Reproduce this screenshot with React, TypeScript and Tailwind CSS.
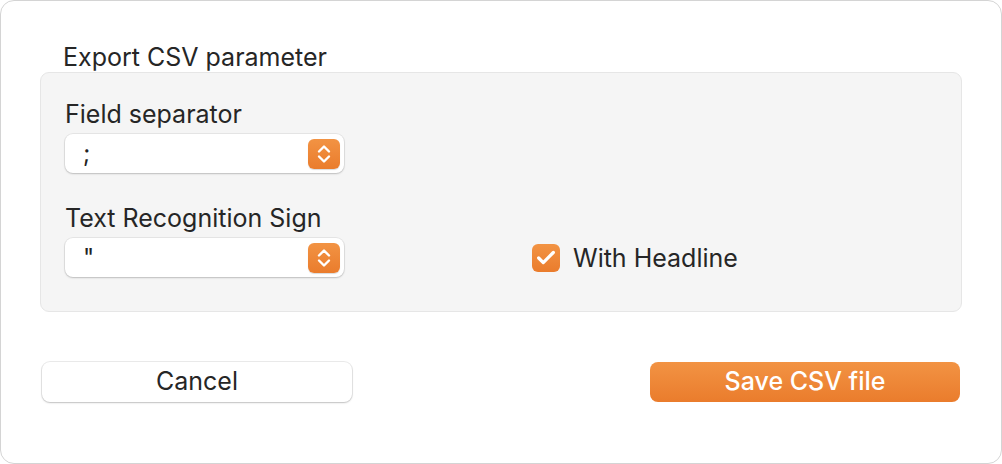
import { Check } from 'lucide-react'

function Stepper() {
  return (
    <div className="w-[32px] h-[30px] rounded-[6px] bg-gradient-to-b from-[#f29343] to-[#ea7c2c] flex items-center justify-center shadow-[0_1px_1px_rgba(0,0,0,0.15)]">
      <svg width="16" height="22" viewBox="0 0 16 22" fill="none" stroke="white" strokeWidth="2.4" strokeLinecap="round" strokeLinejoin="round">
        <path d="M3 8.5 L8 3.5 L13 8.5" />
        <path d="M3 13.5 L8 18.5 L13 13.5" />
      </svg>
    </div>
  )
}

function Select({ value }: { value: string }) {
  return (
    <div className="w-[279px] h-[39px] bg-white rounded-[8px] shadow-[0_0_0_1px_rgba(0,0,0,0.06),0_1px_2px_rgba(0,0,0,0.18)] flex items-center justify-between pl-[18px] pr-[4px]">
      <span className="text-[24px] text-[#222]">{value}</span>
      <Stepper />
    </div>
  )
}

export default function App() {
  return (
    <div className="w-[1002px] h-[464px] bg-white">
      <div
        className="h-full bg-white rounded-[14px] border border-[#d4d4d4] text-[#262626] flex flex-col"
        style={{ fontFamily: 'Inter, "Noto Sans", sans-serif' }}
      >
        {/* Title */}
        <div className="pl-[62px] pt-[41px] text-[25px] leading-[30px]">Export CSV parameter</div>

        {/* Parameter box */}
        <div className="mx-[39px] h-[240px] bg-[#f5f5f5] border border-[#e6e6e6] rounded-[9px] pl-[24px] pt-[26px] flex">
          <div className="flex flex-col">
            <div className="text-[25px] leading-[30px]">Field separator</div>
            <div className="mt-[5px]">
              <Select value=";" />
            </div>
            <div className="text-[25px] leading-[30px] mt-[30px]">Text Recognition Sign</div>
            <div className="mt-[5px]">
              <Select value={'"'} />
            </div>
          </div>
          <div className="ml-[188px] mt-[145px] flex items-start gap-[13px]">
            <div className="w-[28px] h-[28px] rounded-[6px] bg-gradient-to-b from-[#f29343] to-[#ea7c2c] flex items-center justify-center">
              <Check className="w-[22px] h-[22px] text-white" strokeWidth={3.5} />
            </div>
            <span className="text-[25px] leading-[30px] -mt-[1px]">With Headline</span>
          </div>
        </div>

        {/* Buttons */}
        <div className="flex justify-between px-[41px] mt-[50px]">
          <button className="w-[310px] h-[40px] bg-white rounded-[8px] shadow-[0_0_0_1px_rgba(0,0,0,0.08),0_1px_2px_rgba(0,0,0,0.18)] text-[25px] text-[#262626]">
            Cancel
          </button>
          <button className="w-[310px] h-[40px] rounded-[8px] bg-gradient-to-b from-[#f29343] to-[#ea7c2c] text-[25px] text-white font-medium">
            Save CSV file
          </button>
        </div>
      </div>
    </div>
  )
}
